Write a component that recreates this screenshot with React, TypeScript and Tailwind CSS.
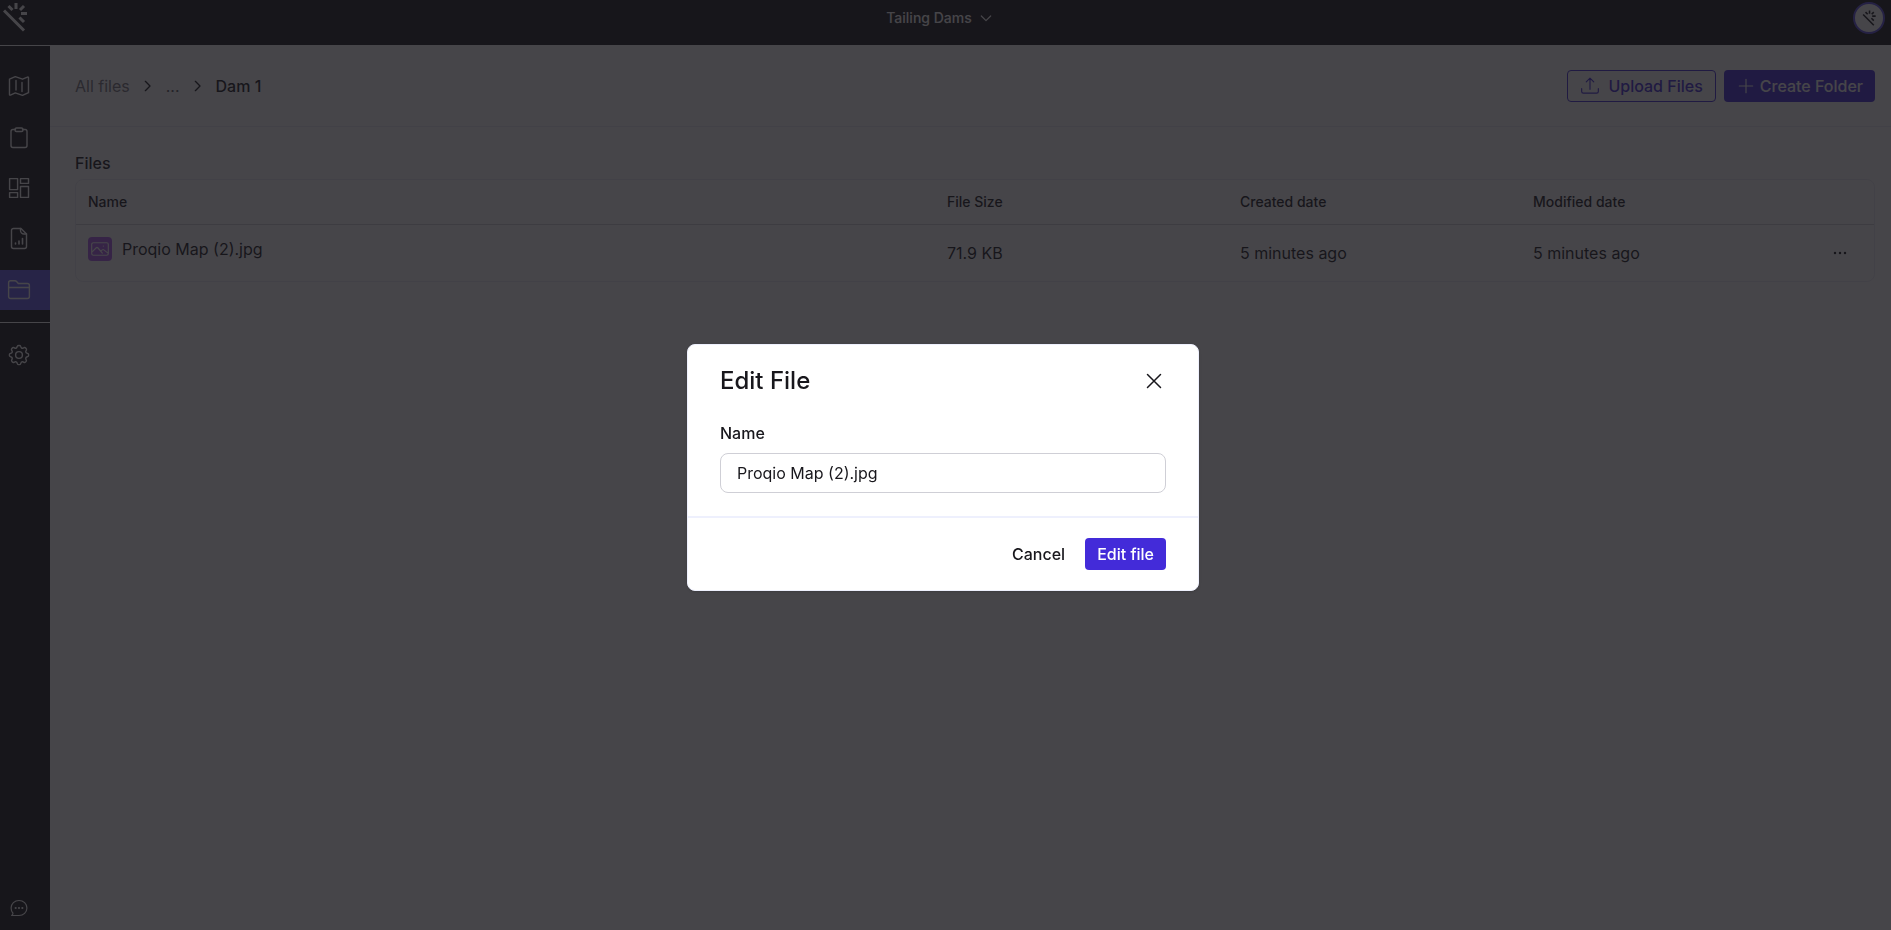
import { useState } from 'react';
import type { ReactNode } from 'react';

interface IconProps {
  className?: string;
  children: ReactNode;
  viewBox?: string;
}

function Icon({ className = 'size-6', children, viewBox = '0 0 24 24' }: IconProps) {
  return (
    <svg
      className={className}
      viewBox={viewBox}
      fill="none"
      stroke="currentColor"
      strokeWidth="1.4"
      strokeLinecap="round"
      strokeLinejoin="round"
      aria-hidden="true"
    >
      {children}
    </svg>
  );
}

function WandIcon({ className }: { className: string }) {
  return (
    <svg className={className} viewBox="0 0 24 30" fill="none" stroke="currentColor" strokeWidth="3" aria-hidden="true">
      <path d="M1 8.500 21 28.500M5.500 4 9.500 8M13 1V7M21 4 17 8M18 11.500H24.500M16.500 15.500 21 20" />
    </svg>
  );
}

const MapIcon = () => (
  <Icon>
    <path d="m2.500 5.200 5.800-2.500 7.200 2.500 5-2.100c.5-.2 1 .1 1 .6v15l-6 2.700-7.200-2.500-4.900 2.200c-.5.2-.9-.1-.9-.6V5.200ZM9 6.500v9.500M15 8.500v9" />
  </Icon>
);

const ClipboardIcon = () => (
  <Icon>
    <path d="M8.500 4.500H6A2 2 0 0 0 4 6.500v14a2 2 0 0 0 2 2h12a2 2 0 0 0 2-2v-14a2 2 0 0 0-2-2h-2.500" />
    <path d="M9.500 3h5c1 0 1.500 1 1.500 2s-.7 1.500-1.500 1.500h-5C8.700 6.500 8 6 8 5s.5-2 1.500-2Z" />
  </Icon>
);

const DashboardIcon = () => (
  <Icon>
    <path d="M2.600 2.600h8v11h-8zM2.600 16.600h8v4.800h-8zM13.500 2.600h8v4.800h-8zM13.500 10.500h8v10.900h-8z" />
  </Icon>
);

const ReportIcon = () => (
  <Icon>
    <path d="M14 1.500H6.500a2 2 0 0 0-2 2v16a2 2 0 0 0 2 2h11a2 2 0 0 0 2-2V7L14 1.500Z" />
    <path d="M13.500 1.500v2A3.500 3.500 0 0 0 17 7h2.500" />
    <path d="M8.500 16v1M12 14v3M15.500 11.500v5.500" strokeWidth="1.600" />
  </Icon>
);

const FolderIcon = () => (
  <Icon>
    <path d="M1.600 18.500V4.800c0-1.200.8-2 2-2h4.300c.9 0 1.400.3 1.900.9L11.300 5.500h9.100c1.200 0 2 .8 2 2v11c0 1.200-.8 2-2 2H3.600c-1.200 0-2-.8-2-2ZM1.600 9.500h20.800" />
  </Icon>
);

const GearIcon = () => (
  <Icon>
    <circle cx="12" cy="12" r="3.400" />
    <path d="M10.300 3.400c.4-1.300 3-1.300 3.400 0l.3.900c.3.900 1.300 1.300 2.100.8l.9-.4c1.200-.6 3 1.200 2.400 2.400l-.5.900c-.4.800 0 1.800.9 2.100l.8.300c1.400.4 1.400 2.900 0 3.300l-.9.300c-.9.300-1.200 1.300-.8 2.100l.4.900c.6 1.200-1.200 3-2.400 2.400l-.8-.5c-.8-.4-1.800 0-2.100.9l-.3.800c-.4 1.400-3 1.400-3.400 0l-.3-.9c-.3-.9-1.300-1.200-2.100-.8l-.9.400c-1.200.6-3-1.200-2.300-2.400l.4-.8c.4-.8 0-1.800-.9-2.100l-.8-.3c-1.400-.4-1.400-2.900 0-3.300l.9-.3c.9-.3 1.200-1.300.8-2.100l-.5-.9C3.900 5.900 5.700 4.100 7 4.700l.8.400c.8.500 1.800.1 2.100-.8l.4-.9Z" />
  </Icon>
);

const ChatIcon = () => (
  <Icon className="size-5">
    <path d="M4.800 18.300C3.300 16.600 2.500 14.500 2.500 12c0-5 4.200-9 9.500-9s9.500 4 9.500 9-4.200 9-9.500 9H3.200c1-.8 1.500-1.600 1.600-2.700Z" />
    <path d="M8 12h.01M12 12h.01M16 12h.01" strokeWidth="2.600" />
  </Icon>
);

const navItems = [
  { label: 'Map', icon: MapIcon },
  { label: 'Tasks', icon: ClipboardIcon },
  { label: 'Dashboards', icon: DashboardIcon },
  { label: 'Reports', icon: ReportIcon },
  { label: 'Files', icon: FolderIcon, active: true },
];

const files = [
  { name: 'Proqio Map (2).jpg', size: '71.9 KB', created: '5 minutes ago', modified: '5 minutes ago' },
];

function TopBar() {
  return (
    <header className="flex h-[46px] items-start justify-between border-b border-white bg-[#18171c] pr-1.5 text-white">
      <a href="#" aria-label="Home" className="pl-[3px] pt-0.5">
        <WandIcon className="h-[30px] w-6" />
      </a>
      <button className="flex items-center gap-1.5 pt-2 text-sm font-medium">
        Tailing Dams
        <Icon className="size-4">
          <path d="m5 9 7 7 7-7" strokeWidth="1.800" />
        </Icon>
      </button>
      <button
        aria-label="Account"
        className="mt-0.5 flex size-8 items-center justify-center rounded-full border-2 border-[#5b4ee6] bg-white text-[#18171c]"
      >
        <WandIcon className="size-4" />
      </button>
    </header>
  );
}

function Sidebar() {
  return (
    <nav className="flex w-[50px] shrink-0 flex-col bg-[#18171c] pt-5 text-white">
      <div className="flex flex-col gap-[11px]">
        {navItems.map(({ label, icon: NavIcon, active }) => (
          <a
            key={label}
            href="#"
            aria-label={label}
            className={`flex h-10 items-center pl-[7px] ${active ? 'bg-[#665cf5]' : ''}`}
          >
            <NavIcon />
          </a>
        ))}
      </div>
      <div className="my-3 border-t border-white" />
      <a href="#" aria-label="Settings" className="flex h-10 items-center pl-[7px]">
        <GearIcon />
      </a>
      <a href="#" aria-label="Support" className="mt-auto flex h-11 items-center pl-[9px]">
        <ChatIcon />
      </a>
    </nav>
  );
}

const CrumbArrow = () => (
  <Icon className="size-4">
    <path d="m8 5 7 7-7 7" strokeWidth="2" />
  </Icon>
);

function PageHeader() {
  return (
    <div className="flex h-[81px] items-start justify-between border-b border-[#ececf4] pl-[25px] pr-4 pt-6">
      <div className="flex h-8 items-center gap-2.5 text-[#18171c]">
        <a href="#" className="text-[#77767d]">All files</a>
        <CrumbArrow />
        <a href="#" className="text-[#55545c]">...</a>
        <CrumbArrow />
        <span className="font-medium">Dam 1</span>
      </div>
      <div className="flex gap-2 font-medium">
        <button className="flex h-8 items-center gap-2 rounded-sm border border-[#432bd9] px-3 text-[#432bd9]">
          <Icon className="size-5">
            <path d="M2 15v3.500a2 2 0 0 0 2 2h16a2 2 0 0 0 2-2V15M12 16V2.500M7.500 7 12 2.500 16.500 7" />
          </Icon>
          Upload Files
        </button>
        <button className="flex h-8 items-center gap-1 rounded-sm bg-[#432bd9] px-3 text-white">
          <Icon className="size-5">
            <path d="M12 4v16M4 12h16" />
          </Icon>
          Create Folder
        </button>
      </div>
    </div>
  );
}

function FilesTable() {
  return (
    <section className="pl-[25px] pr-4 pt-6">
      <h2 className="font-medium leading-6">Files</h2>
      <div className="mt-1 overflow-hidden rounded-lg border border-[#ececf4]">
        <table className="w-full table-fixed text-left">
          <thead>
            <tr className="h-11 border-b border-[#cfcfd8] text-sm">
              <th className="px-3 font-medium">Name</th>
              <th className="w-[293px] px-3 font-medium">File Size</th>
              <th className="w-[293px] px-3 font-medium">Created date</th>
              <th className="w-[293px] px-3 font-medium">Modified date</th>
              <th className="w-[60px]" aria-label="Actions" />
            </tr>
          </thead>
          <tbody>
            {files.map((file) => (
              <tr key={file.name} className="h-[57px]">
                <td className="px-3 pb-2">
                  <div className="flex items-center gap-2.5">
                    <span className="flex size-6 items-center justify-center rounded bg-[#b05cf0] text-white">
                      <Icon className="size-5">
                        <path d="M4 4.500h16a2 2 0 0 1 2 2v11a2 2 0 0 1-2 2H4a2 2 0 0 1-2-2v-11a2 2 0 0 1 2-2ZM2 16l5.500-5.500c.6-.6 1.200-.6 1.800 0l5.500 6.500M13 14.500l1.800-1.500c.6-.5 1.200-.5 1.800 0l5 4M16 8.500h.01" />
                      </Icon>
                    </span>
                    {file.name}
                  </div>
                </td>
                <td className="px-3">{file.size}</td>
                <td className="px-3">{file.created}</td>
                <td className="px-3">{file.modified}</td>
                <td className="px-3">
                  <button aria-label="File actions" className="flex items-center pl-1">
                    <Icon className="size-5">
                      <path d="M6 12h.01M12 12h.01M18 12h.01" strokeWidth="3" />
                    </Icon>
                  </button>
                </td>
              </tr>
            ))}
          </tbody>
        </table>
      </div>
    </section>
  );
}

function EditFileDialog({ onClose }: { onClose: () => void }) {
  const [name, setName] = useState(files[0].name);

  return (
    <div className="fixed inset-0 flex items-center justify-center bg-[#18171c]/80 pr-[5px] pt-[5px]">
      <div
        role="dialog"
        aria-modal="true"
        aria-labelledby="edit-file-title"
        className="w-full max-w-lg rounded-lg border border-[#eef0fd] bg-white shadow-sm"
      >
        <div className="flex items-center justify-between px-8 pt-5">
          <h2 id="edit-file-title" className="text-2xl font-medium">Edit File</h2>
          <button aria-label="Close" onClick={onClose}>
            <Icon className="size-6">
              <path d="m5.500 5.500 13 13M18.500 5.500l-13 13" strokeWidth="1.500" />
            </Icon>
          </button>
        </div>
        <div className="px-8 pb-[23px] pt-6">
          <label htmlFor="file-name" className="block font-medium leading-6">Name</label>
          <input
            id="file-name"
            type="text"
            value={name}
            onChange={(e) => setName(e.target.value)}
            className="mt-2 block h-10 w-full rounded-lg border border-[#cfcfd6] px-4 outline-none"
          />
        </div>
        <div className="flex justify-end gap-2 border-t-2 border-[#eef0fd] px-8 py-5 font-medium">
          <button onClick={onClose} className="h-8 px-3">Cancel</button>
          <button className="h-8 rounded-sm bg-[#432bd9] px-3 text-white">Edit file</button>
        </div>
      </div>
    </div>
  );
}

export default function App() {
  const [editing, setEditing] = useState(true);

  return (
    <div className="flex min-h-screen flex-col bg-white font-['Inter',sans-serif] text-base text-[#18171c]">
      <TopBar />
      <div className="flex grow">
        <Sidebar />
        <main className="min-w-0 grow">
          <PageHeader />
          <FilesTable />
        </main>
      </div>
      {editing && <EditFileDialog onClose={() => setEditing(false)} />}
    </div>
  );
}
